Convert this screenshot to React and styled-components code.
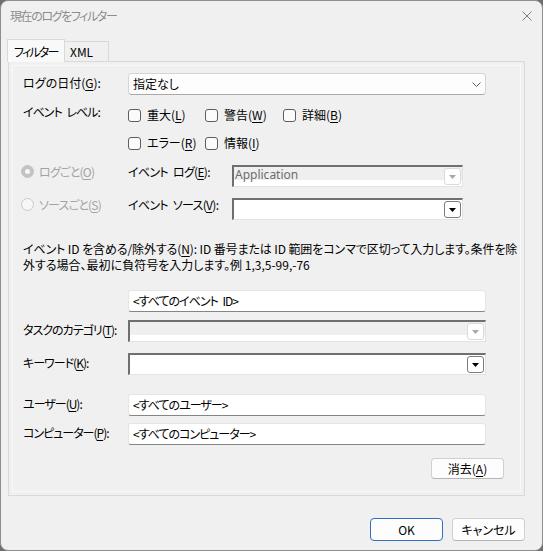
import React from 'react';
import styled, { createGlobalStyle } from 'styled-components';

const GlobalStyle = createGlobalStyle`
  html, body {
    margin: 0;
    padding: 0;
    background: #6e6e6e;
  }
  body {
    font-family: 'Noto Sans CJK JP', 'Noto Sans', sans-serif;
    font-size: 12px;
    color: #000;
    font-feature-settings: 'palt';
  }
  * {
    box-sizing: border-box;
  }
`;

const levels = [
  ['重大', 'L'],
  ['警告', 'W'],
  ['詳細', 'B'],
  ['エラー', 'R'],
  ['情報', 'I'],
];

function Acc({ text, k }) {
  return (
    <>
      {text}(<U>{k}</U>)
    </>
  );
}

function Arrow({ disabled }) {
  return (
    <DropButton $disabled={disabled}>
      <svg width="7" height="4" viewBox="0 0 7 4">
        <polygon points="0,0 7,0 3.5,4" fill={disabled ? '#a8a8a8' : '#000'} />
      </svg>
    </DropButton>
  );
}

function LegacySelect({ width, disabled, value }) {
  return (
    <SelectBox $w={width} $disabled={disabled}>
      <SelectText>{value}</SelectText>
      <Arrow disabled={disabled} />
    </SelectBox>
  );
}

export default function App() {
  return (
    <>
      <GlobalStyle />
      <Window>
        <TitleBar>
          <Title>現在のログをフィルター</Title>
          <svg width="10" height="10" viewBox="0 0 10 10">
            <path d="M0.5 0.5 L9.5 9.5 M9.5 0.5 L0.5 9.5" stroke="#7c7c7c" strokeWidth="1" />
          </svg>
        </TitleBar>

        <Content>
          <TabBar>
            <Tab $active>フィルター</Tab>
            <Tab>XML</Tab>
          </TabBar>

          <Panel>
            <Form>
              <Row>
                <Label $ls={0}><Acc text="ログの日付" k="G" />:</Label>
                <Combo>
                  <span>指定なし</span>
                  <svg width="9" height="5" viewBox="0 0 9 5">
                    <polyline points="0.5,0.5 4.5,4.5 8.5,0.5" fill="none" stroke="#5c5c5c" strokeWidth="1" />
                  </svg>
                </Combo>
              </Row>

              <Row $top={10} $align="flex-start">
                <Label $pad={0}>イベント レベル:</Label>
                <LevelGrid>
                  {levels.map(([text, k]) => (
                    <CheckItem key={k}>
                      <CheckBox />
                      <span><Acc text={text} k={k} /></span>
                    </CheckItem>
                  ))}
                </LevelGrid>
              </Row>

              <RadioRow $top={12}>
                <RadioItem>
                  <RadioDot $checked />
                  <span><Acc text="ログごと" k="O" /></span>
                </RadioItem>
                <FieldLabel><Acc text="イベント ログ" k="E" />:</FieldLabel>
                <LegacySelect width={231} disabled value="Application" />
              </RadioRow>

              <RadioRow $top={11}>
                <RadioItem>
                  <RadioDot />
                  <span><Acc text="ソースごと" k="S" /></span>
                </RadioItem>
                <FieldLabel><Acc text="イベント ソース" k="V" />:</FieldLabel>
                <LegacySelect width={231} />
              </RadioRow>

              <Help>
                <Line $ls={-0.1}>
                  イベント ID を含める/除外する(<U>N</U>): ID 番号または ID 範囲をコンマで区切って入力します。条件を除
                </Line>
                <Line>外する場合、最初に負符号を入力します。例 1,3,5-99,-76</Line>
              </Help>

              <Row $top={17}>
                <Label />
                <TextInput>&lt;すべてのイベント ID&gt;</TextInput>
              </Row>

              <Row $top={8}>
                <Label><Acc text="タスクのカテゴリ" k="T" />:</Label>
                <LegacySelect width={358} disabled />
              </Row>

              <Row $top={11}>
                <Label><Acc text="キーワード" k="K" />:</Label>
                <LegacySelect width={358} />
              </Row>

              <Row $top={19}>
                <Label><Acc text="ユーザー" k="U" />:</Label>
                <TextInput>&lt;すべてのユーザー&gt;</TextInput>
              </Row>

              <Row $top={7}>
                <Label><Acc text="コンピューター" k="P" />:</Label>
                <TextInput>&lt;すべてのコンピューター&gt;</TextInput>
              </Row>

              <ClearRow>
                <Button $h={21}><Acc text="消去" k="A" /></Button>
              </ClearRow>
            </Form>
          </Panel>

          <Footer>
            <Button $primary>OK</Button>
            <Button>キャンセル</Button>
          </Footer>
        </Content>
      </Window>
    </>
  );
}

/* Style */
const Window = styled.div`
  width: 543px;
  height: 551px;
  background: #f0f0f0;
  border: 1px solid #8e8e8e;
  border-radius: 8px;
  display: flex;
  flex-direction: column;
  overflow: hidden;
`;

const TitleBar = styled.div`
  height: 29px;
  display: flex;
  align-items: center;
  justify-content: space-between;
  padding: 0 10px 0 9px;
`;

const Title = styled.div`
  color: #8c8c8c;
  font-size: 12px;
  line-height: 14px;
  letter-spacing: -1.4px;
`;

const Content = styled.div`
  padding: 9px 17px 0 7px;
  display: flex;
  flex-direction: column;
`;

const TabBar = styled.div`
  display: flex;
  align-items: flex-end;
  height: 22px;
  margin-left: -1px;
`;

const Tab = styled.div`
  position: relative;
  z-index: ${(p) => (p.$active ? 1 : 0)};
  width: ${(p) => (p.$active ? 58 : 44)}px;
  height: ${(p) => (p.$active ? 23 : 20)}px;
  margin-bottom: ${(p) => (p.$active ? -1 : 0)}px;
  padding: ${(p) => (p.$active ? '1px 0 0 6px' : '0 0 0 5px')};
  background: ${(p) => (p.$active ? '#f9f9f9' : '#f0f0f0')};
  border: 1px solid #d9d9d9;
  border-bottom: none;
  border-left: ${(p) => (p.$active ? '1px solid #d9d9d9' : 'none')};
  display: flex;
  align-items: center;
  line-height: 14px;
  letter-spacing: ${(p) => (p.$active ? -1.8 : 0)}px;
  white-space: nowrap;
`;

const Panel = styled.div`
  height: 435px;
  border: 1px solid #d9d9d9;
  background: #f0f0f0;
  box-shadow: inset 0 0 0 3px #f0f0f0, inset 0 0 0 4px #f9f9f9;
`;

const Form = styled.div`
  display: flex;
  flex-direction: column;
  padding: 11px 0 0 14px;
`;

const Row = styled.div`
  display: flex;
  align-items: ${(p) => p.$align || 'center'};
  margin-top: ${(p) => p.$top || 0}px;
`;

const RadioRow = styled(Row)`
  align-items: flex-start;
  margin-left: -2px;
`;

const Label = styled.div`
  width: 105px;
  flex-shrink: 0;
  line-height: 14px;
  padding-bottom: ${(p) => (p.$pad === undefined ? 2 : p.$pad)}px;
  letter-spacing: ${(p) => (p.$ls === undefined ? -1 : p.$ls)}px;
  word-spacing: 3px;
  white-space: nowrap;
`;

const FieldLabel = styled.div`
  width: 104px;
  flex-shrink: 0;
  line-height: 13px;
  letter-spacing: -0.7px;
  word-spacing: 3px;
  white-space: nowrap;
`;

const U = styled.span`
  text-decoration: underline;
  text-underline-offset: 2px;
`;

const Combo = styled.div`
  width: 358px;
  height: 22px;
  background: #fdfdfd;
  border: 1px solid #d5d5d5;
  border-bottom-color: #a9a9a9;
  border-radius: 4px;
  display: flex;
  align-items: center;
  justify-content: space-between;
  padding: 0 4px 0 4px;
  line-height: 14px;
`;

const LevelGrid = styled.div`
  display: grid;
  grid-template-columns: 77px 78px auto;
  grid-auto-rows: 20px;
  row-gap: 8px;
`;

const CheckItem = styled.div`
  display: flex;
  align-items: center;
  gap: 6px;
  white-space: nowrap;
  line-height: 14px;
`;

const CheckBox = styled.span`
  width: 13px;
  height: 13px;
  border: 1px solid #5d5d5d;
  border-radius: 3px;
  background: #fbfbfb;
  flex-shrink: 0;
`;

const RadioItem = styled.div`
  width: 107px;
  flex-shrink: 0;
  display: flex;
  align-items: center;
  gap: 5px;
  height: 13px;
  color: #a3a3a3;
  white-space: nowrap;
  line-height: 13px;
  letter-spacing: -0.8px;
`;

const RadioDot = styled.span`
  width: 13px;
  height: 13px;
  border-radius: 50%;
  flex-shrink: 0;
  display: flex;
  align-items: center;
  justify-content: center;
  background: ${(p) => (p.$checked ? '#c3c3c3' : '#f6f6f6')};
  border: 1px solid ${(p) => (p.$checked ? '#c3c3c3' : '#cacaca')};
  &::after {
    content: '';
    width: 5px;
    height: 5px;
    border-radius: 50%;
    background: ${(p) => (p.$checked ? '#f7f7f7' : 'transparent')};
  }
`;

const SelectBox = styled.div`
  width: ${(p) => p.$w}px;
  height: 22px;
  border-top: 2px solid #6f6f6f;
  border-left: 2px solid #6f6f6f;
  border-right: 1px solid #e3e3e3;
  border-bottom: 1px solid #e3e3e3;
  background: ${(p) =>
    p.$disabled ? 'linear-gradient(to bottom, #efefef 0 13px, #ffffff 13px)' : '#ffffff'};
  display: flex;
  justify-content: space-between;
  align-items: flex-start;
  padding: 1px 1px 0 1px;
`;

const SelectText = styled.span`
  font-family: 'Noto Sans', 'Liberation Sans', sans-serif;
  color: #6d6d6d;
  font-size: 12px;
  line-height: 14px;
`;

const DropButton = styled.span`
  width: 17px;
  height: 17px;
  border: 1px solid ${(p) => (p.$disabled ? '#dadada' : '#7d7d7d')};
  border-radius: 3px;
  background: #fff;
  display: flex;
  align-items: center;
  justify-content: center;
  flex-shrink: 0;
`;

const Help = styled.div`
  margin-top: 21px;
  line-height: 16px;
`;

const Line = styled.div`
  white-space: nowrap;
  letter-spacing: ${(p) => p.$ls || 0}px;
`;

const TextInput = styled.div`
  width: 358px;
  height: 22px;
  background: #fff;
  border: 1px solid #e5e5e5;
  border-bottom-color: #858585;
  border-radius: 3px;
  padding: 0 4px;
  display: flex;
  align-items: center;
  line-height: 14px;
  letter-spacing: -1px;
  word-spacing: 3px;
  white-space: nowrap;
`;

const ClearRow = styled.div`
  display: flex;
  justify-content: flex-end;
  padding-right: 20px;
  margin-top: 13px;
`;

const Button = styled.button`
  width: 73px;
  height: ${(p) => p.$h || 23}px;
  padding: 0;
  background: #fdfdfd;
  border: 1px solid ${(p) => (p.$primary ? '#2f6fc4' : '#d0d0d0')};
  border-bottom-color: ${(p) => (p.$primary ? '#2f6fc4' : '#b5b5b5')};
  border-radius: 4px;
  font-family: inherit;
  font-size: 12px;
  line-height: 14px;
  color: #000;
  font-feature-settings: 'palt';
`;

const Footer = styled.div`
  display: flex;
  justify-content: flex-end;
  gap: 9px;
  margin-top: 22px;
`;
